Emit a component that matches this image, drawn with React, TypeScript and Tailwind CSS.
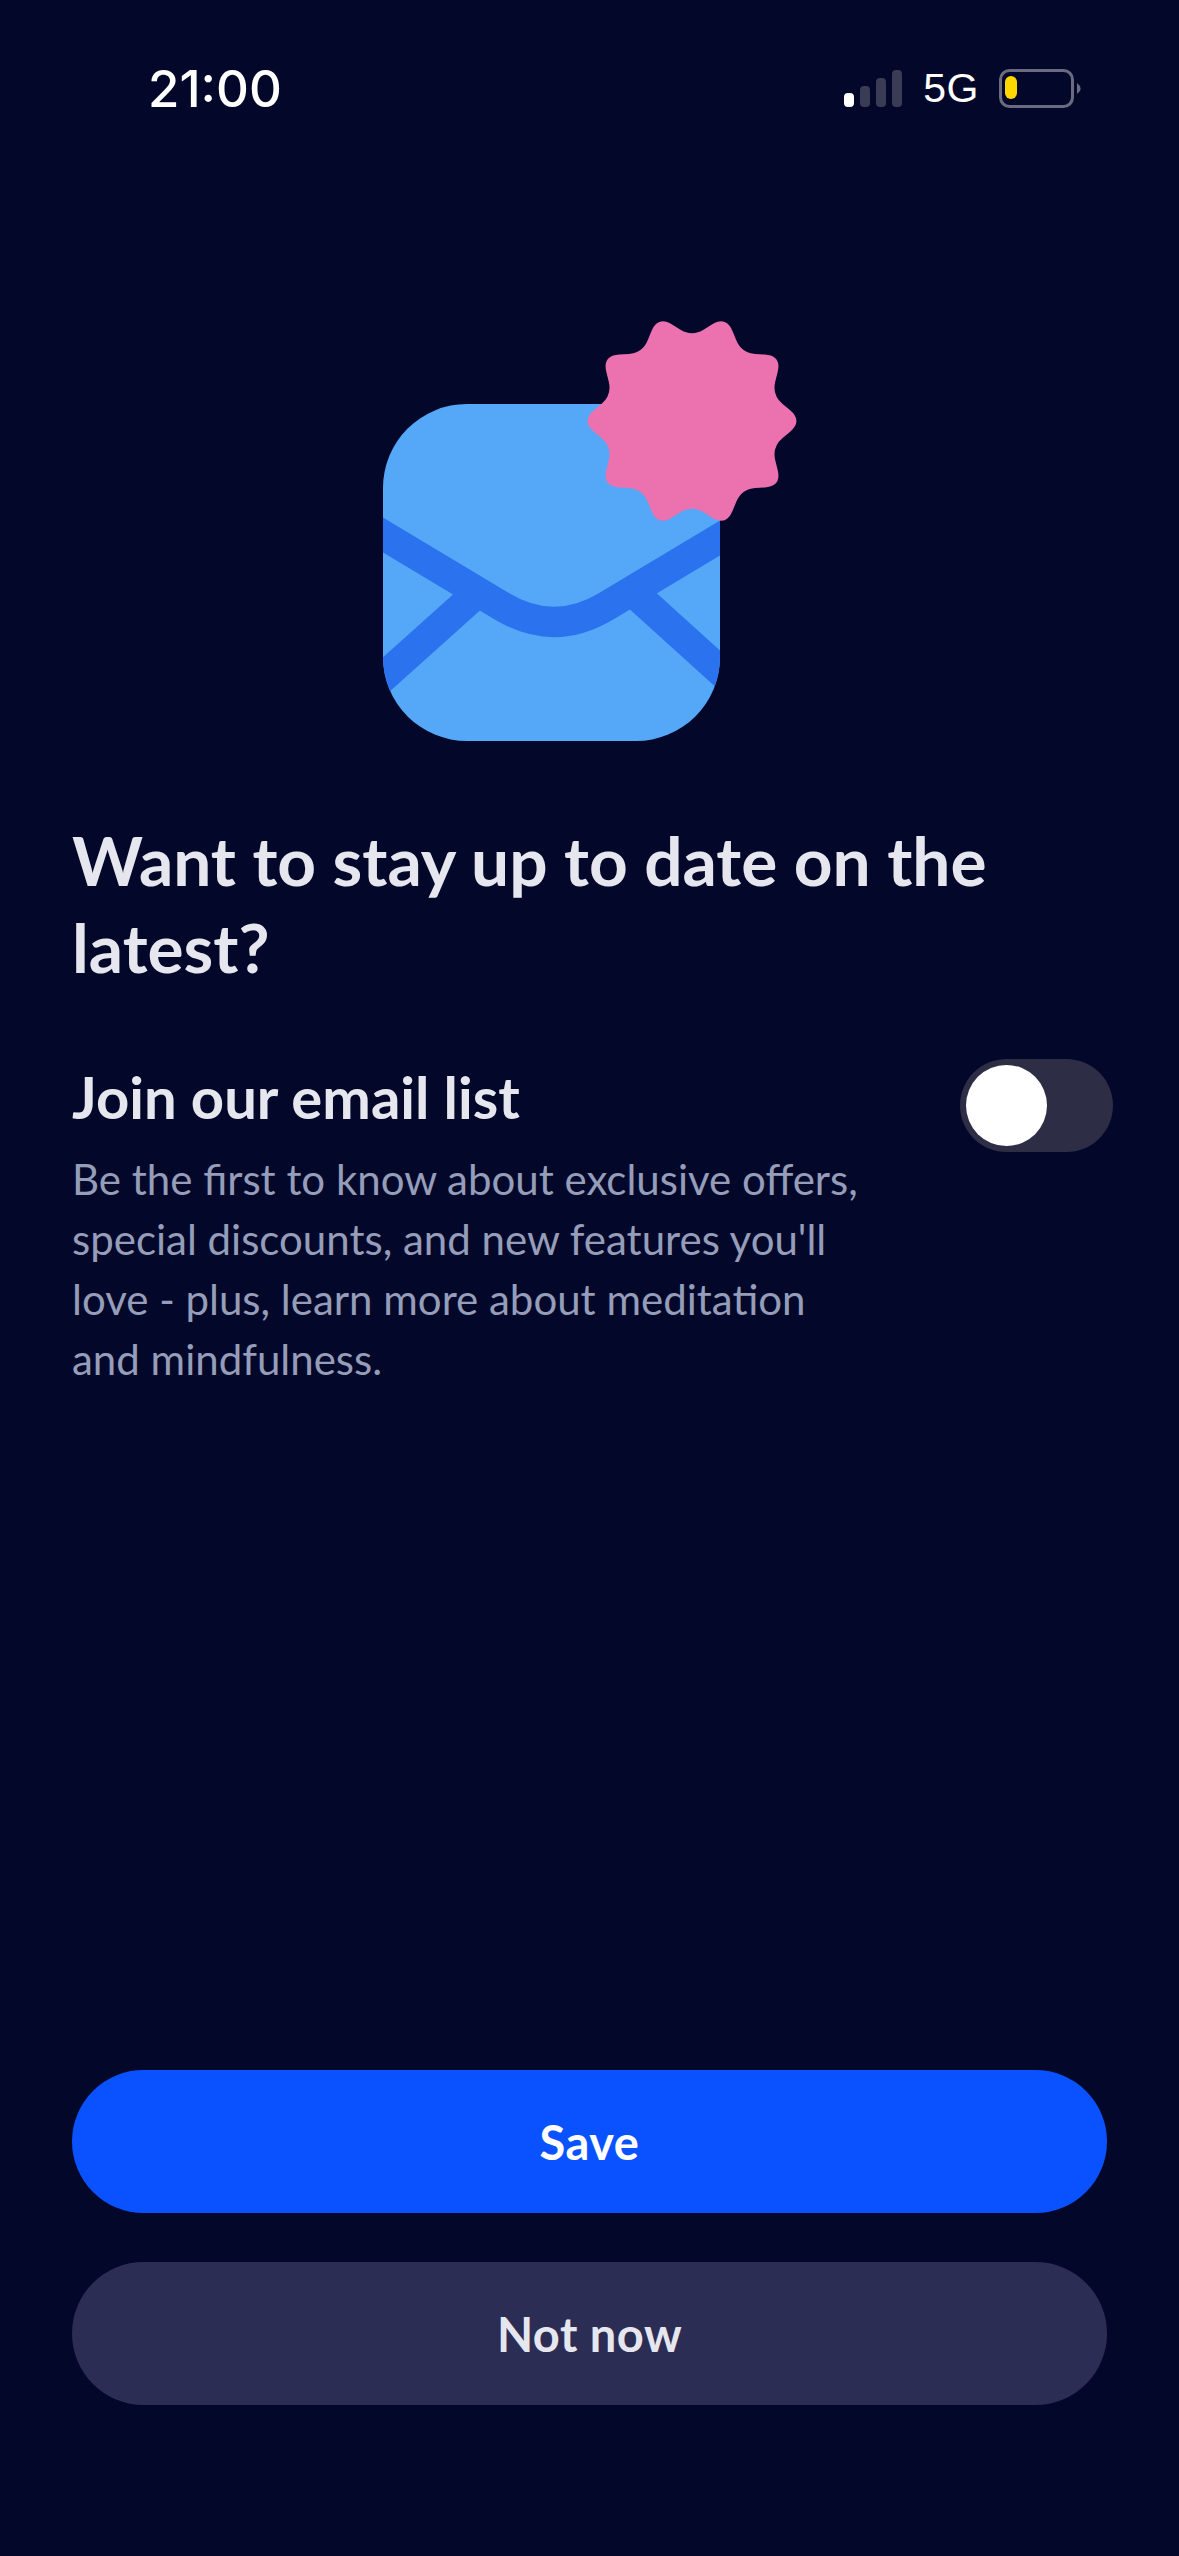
const badgePath = () => {
  // 10-point badge, each corner rounded with a quadratic curve
  const cx = 352;
  const cy = 131;
  const pts: [number, number][] = [];
  for (let i = 0; i < 20; i++) {
    const r = i % 2 === 0 ? 111 : 84;
    const a = (Math.PI * i) / 10;
    pts.push([cx + r * Math.cos(a), cy + r * Math.sin(a)]);
  }
  const toward = (p: [number, number], q: [number, number], t: number) => {
    const len = Math.hypot(q[0] - p[0], q[1] - p[1]);
    return [p[0] + ((q[0] - p[0]) * t) / len, p[1] + ((q[1] - p[1]) * t) / len];
  };
  let d = "";
  pts.forEach((p, i) => {
    const t = i % 2 === 0 ? 17 : 14;
    const a = toward(p, pts[(i + 19) % 20], t);
    const b = toward(p, pts[(i + 1) % 20], t);
    d += `${i === 0 ? "M" : "L"}${a[0].toFixed(1)} ${a[1].toFixed(1)} Q${p[0].toFixed(1)} ${p[1].toFixed(1)} ${b[0].toFixed(1)} ${b[1].toFixed(1)} `;
  });
  return d + "Z";
};

const Illustration = () => (
  <svg width="480" height="480" viewBox="0 0 480 480" fill="none" className="ml-[340px]">
    <defs>
      <clipPath id="env">
        <rect x="43" y="114" width="337" height="337" rx="84" />
      </clipPath>
    </defs>
    <rect x="43" y="114" width="337" height="337" rx="84" fill="#55A7F7" />
    <g clipPath="url(#env)" stroke="#2B73EE" strokeWidth="30">
      <path d="M134.4 305.3L20 408" />
      <path d="M295.6 304.3L400 399" />
      <path d="M20 231.2L162 316.4Q214 347.6 266 316.4L400 236" />
    </g>
    <path d={badgePath()} fill="#EB72AE" />
  </svg>
);

const StatusBar = () => (
  <div className="flex items-center justify-between pl-[148px] pr-[98px] pt-[58px] h-[118px]">
    <span className="text-[51px] leading-none font-medium text-white font-['Inter',sans-serif]">21:00</span>
    <div className="flex items-center">
      <svg width="58" height="37" viewBox="0 0 58 37" className="mr-[21px]">
        <rect x="0" y="23" width="10" height="14" rx="4" fill="#fff" />
        <rect x="16" y="16" width="10" height="21" rx="4" fill="#3A3B55" />
        <rect x="32" y="8" width="10" height="29" rx="4" fill="#3A3B55" />
        <rect x="48" y="0" width="10" height="37" rx="4" fill="#3A3B55" />
      </svg>
      <span className="text-[41px] leading-none tracking-[0.5px] text-white font-['Liberation_Sans',sans-serif] mr-[20px]">5G</span>
      <svg width="82" height="39" viewBox="0 0 82 39">
        <rect x="1.5" y="1.5" width="72" height="36" rx="9" fill="none" stroke="#6A6A80" strokeWidth="3" />
        <rect x="6" y="7" width="12" height="23" rx="6" fill="#FFD600" />
        <path d="M78 14L81 17Q82 19.5 81 22L78 25Z" fill="#6A6A80" />
      </svg>
    </div>
  </div>
);

export default function App() {
  return (
    <div className="w-[1179px] h-[2556px] bg-[#03082B] flex flex-col font-['Lato','Noto_Sans',sans-serif]">
      <StatusBar />
      <div className="flex mt-[172px]">
        <Illustration />
      </div>
      <div className="px-[72px] mt-[46px]">
        <h1 className="text-[67.6px] leading-[87px] font-bold text-[#E6E7EE]">
          Want to stay up to date on the latest?
        </h1>
        <div className="flex justify-between mt-[69px]">
          <div className="w-[800px]">
            <h2 className="text-[58px] leading-[76px] font-bold text-[#E6E7EE]">Join our email list</h2>
            <p className="text-[42px] leading-[60px] mt-[14px] text-[#959DB8]">
              Be the first to know about exclusive offers, special discounts, and new features you'll love - plus, learn more about meditation and mindfulness.
            </p>
          </div>
          <div className="w-[153px] h-[93px] rounded-full bg-[#2D2D45] flex items-center pl-[6px] mr-[-6px]">
            <div className="w-[81px] h-[81px] rounded-full bg-white" />
          </div>
        </div>
      </div>
      <div className="mt-auto px-[72px] pb-[151px] flex flex-col gap-[49px]">
        <button className="h-[143px] pt-[2px] rounded-[72px] bg-[#0A52FF] text-white text-[47px] font-bold tracking-[0.5px]">Save</button>
        <button className="h-[143px] pt-[2px] rounded-[72px] bg-[#2C2D55] text-[#E6E7EE] text-[47px] font-bold tracking-[0.5px]">Not now</button>
      </div>
    </div>
  );
}
